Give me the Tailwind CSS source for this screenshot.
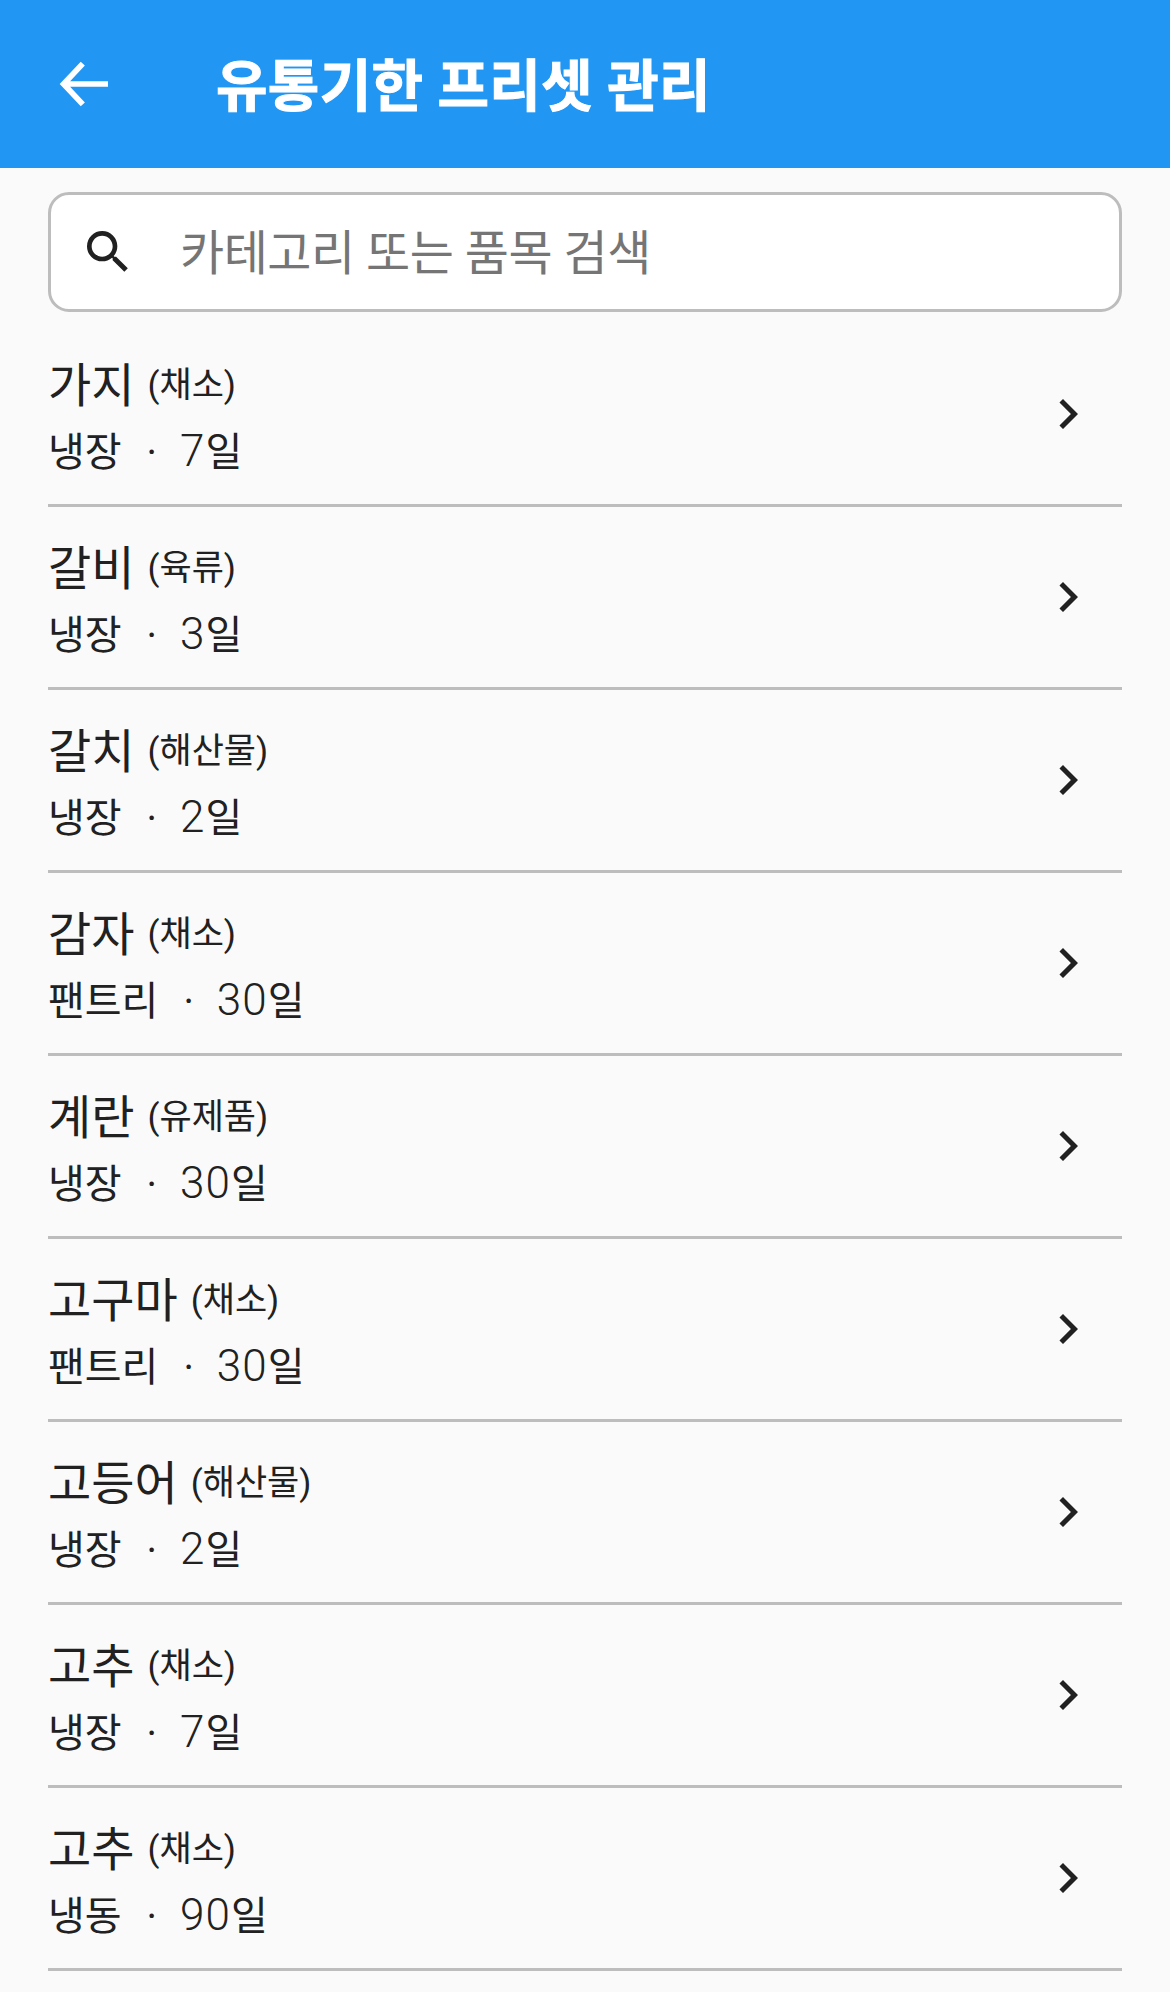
<!DOCTYPE html>
<html lang="ko">

<head>
    <meta charset="UTF-8">
    <meta name="viewport" content="width=device-width, initial-scale=1.0">
    <title>유통기한 프리셋 관리</title>
    <script src="https://cdn.jsdelivr.net/npm/@tailwindcss/browser@4"></script>
</head>

<body class="bg-[#fafafa] font-['Roboto','Noto_Sans_CJK_KR',sans-serif] overflow-hidden">
    <div class="w-[1170px] h-[1992px] overflow-hidden">
        <!-- App bar -->
        <header class="h-[168px] bg-[#2196f3] flex items-center">
            <svg class="ml-[48px] w-[72px] h-[72px] text-white" viewBox="0 0 24 24" fill="none" stroke="currentColor" stroke-width="1.9">
                <path d="M20 12H5.2M11.6 5.2 5.2 12l6.4 6.8" />
            </svg>
            <h1 class="ml-[96px] mt-[5px] text-[56px] leading-[72px] tracking-[0.3px] font-bold text-white [-webkit-text-stroke:1px_white]">유통기한 프리셋 관리</h1>
        </header>

        <!-- Search -->
        <div class="mx-[48px] mt-[24px] h-[120px] bg-white border-[3px] border-[#bdbdbd] rounded-[21px] flex items-center">
            <svg class="ml-[29px] w-[56px] h-[56px] text-[#212121]" viewBox="0 0 24 24" fill="currentColor">
                <path d="M15.5 14h-.79l-.28-.27A6.47 6.47 0 0 0 16 9.5 6.5 6.5 0 1 0 9.5 16c1.61 0 3.09-.59 4.23-1.57l.27.28v.79l5 4.99L20.49 19l-4.99-5zm-6 0C7.01 14 5 11.99 5 9.5S7.01 5 9.5 5 14 7.01 14 9.5 11.99 14 9.5 14z" />
            </svg>
            <span class="ml-[44px] mt-[4px] text-[48px] leading-[64px] tracking-[-0.5px] text-[#757575]">카테고리 또는 품목 검색</span>
        </div>

        <!-- Preset list -->
        <ul id="presetList" class="mx-[48px] mt-[12px]"></ul>
    </div>

    <script>
        const presets = [
            ["가지", "채소", "냉장", "7"],
            ["갈비", "육류", "냉장", "3"],
            ["갈치", "해산물", "냉장", "2"],
            ["감자", "채소", "팬트리", "30"],
            ["계란", "유제품", "냉장", "30"],
            ["고구마", "채소", "팬트리", "30"],
            ["고등어", "해산물", "냉장", "2"],
            ["고추", "채소", "냉장", "7"],
            ["고추", "채소", "냉동", "90"],
        ];

        const presetList = document.getElementById("presetList");

        presets.forEach(([name, category, storage, days]) => {
            const row = document.createElement("li");
            row.className = "h-[183px] border-b-[3px] border-[#bdbdbd] flex items-center justify-between";
            row.innerHTML = `
                <div class="mt-[8px] text-[#212121]">
                    <p class="flex items-baseline leading-[62px] text-[47px]">
                        <span>${name}</span>
                        <span class="ml-[13px] -translate-y-[5px] text-[35px]">(${category})</span>
                    </p>
                    <p class="flex items-baseline leading-[59px] text-[40px]">
                        <span>${storage}</span>
                        <span class="ml-[25px] mr-[23px]">·</span>
                        <span class="text-[44px] tracking-[1px] font-light">${days}</span>
                        <span>일</span>
                    </p>
                </div>
                <svg class="mr-[24px] w-[60px] h-[60px] text-[#212121]" viewBox="0 0 24 24" fill="currentColor">
                    <path d="M10 6 8.59 7.41 13.17 12l-4.58 4.59L10 18l6-6z" />
                </svg>`;
            presetList.appendChild(row);
        });
    </script>
</body>

</html>
